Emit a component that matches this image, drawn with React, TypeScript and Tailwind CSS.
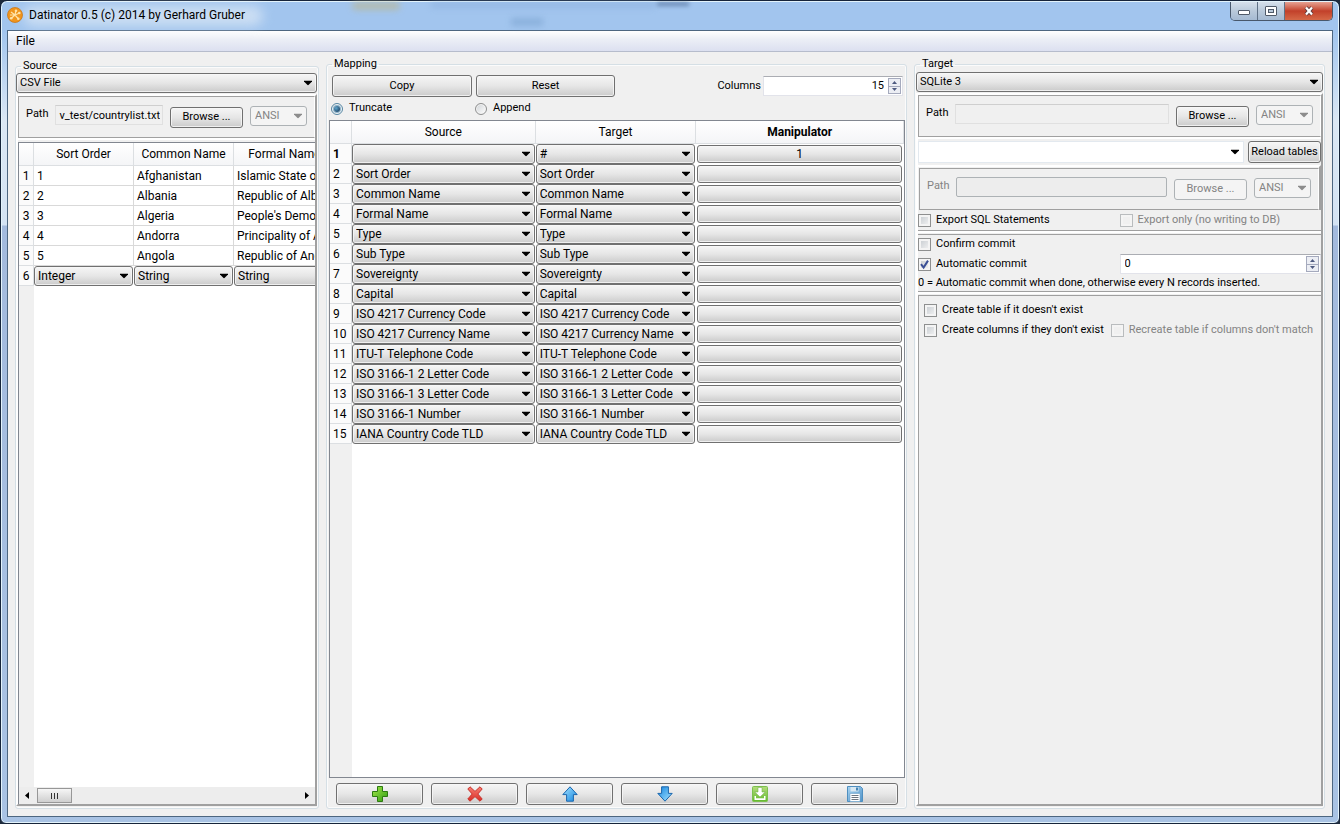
import React, { useState } from 'react'
import clsx from 'clsx'

const fieldNames = [
  'Sort Order',
  'Common Name',
  'Formal Name',
  'Type',
  'Sub Type',
  'Sovereignty',
  'Capital',
  'ISO 4217 Currency Code',
  'ISO 4217 Currency Name',
  'ITU-T Telephone Code',
  'ISO 3166-1 2 Letter Code',
  'ISO 3166-1 3 Letter Code',
  'ISO 3166-1 Number',
  'IANA Country Code TLD',
]

const mappings = [
  { source: '', target: '#', manipulator: '1' },
  ...fieldNames.map((name) => ({ source: name, target: name, manipulator: '' })),
]

const previewRows = [
  ['1', 'Afghanistan', 'Islamic State of Afghanistan'],
  ['2', 'Albania', 'Republic of Albania'],
  ['3', 'Algeria', "People's Democratic Republic of Algeria"],
  ['4', 'Andorra', 'Principality of Andorra'],
  ['5', 'Angola', 'Republic of Angola'],
]

const face =
  'border border-[#707070] rounded-[3px] bg-linear-to-b from-[#f6f6f6] via-[#e6e6e6] to-[#cbcbcb] shadow-[inset_0_0_0_1px_#f8f8f8cc]'
const disabledFace = 'border border-[#adb2b5] rounded-[3px] bg-[#f4f4f4] text-[#838383]'
const headCell = 'h-[23px] border-r border-b border-[#dcdfe2] bg-linear-to-b from-white to-[#f4f5f7] p-0'

interface ButtonProps {
  children?: React.ReactNode
  className?: string
  disabled?: boolean
  label?: string
}

const Button: React.FC<ButtonProps> = ({ children, className, disabled, label }) => (
  <button
    type="button"
    disabled={disabled}
    aria-label={label}
    className={clsx('flex items-center justify-center whitespace-nowrap', disabled ? disabledFace : face, className)}
  >
    {children}
  </button>
)

interface ComboProps {
  label: string
  value: string
  options?: string[]
  className?: string
  disabled?: boolean
  flat?: boolean
}

const Combo: React.FC<ComboProps> = ({ label, value, options, className, disabled, flat }) => (
  <div className={clsx('relative', className)}>
    <select
      aria-label={label}
      defaultValue={value}
      disabled={disabled}
      className={clsx(
        'block h-full w-full appearance-none pr-4 opacity-100',
        disabled ? 'pl-1' : 'pl-[3px]',
        disabled ? disabledFace : flat ? 'border border-[#e3e9ef] bg-white' : face,
      )}
    >
      {(options ?? [value]).map((option) => (
        <option key={option}>{option}</option>
      ))}
    </select>
    <svg
      viewBox="0 0 8 5"
      className={clsx(
        'pointer-events-none absolute top-1/2 right-[5px] h-[5px] w-2 -translate-y-1/2',
        disabled ? 'fill-[#8c8c8c]' : 'fill-black',
      )}
    >
      <path d="M0 0h8v1L4 5 0 1z" />
    </svg>
  </div>
)

interface CheckProps {
  label: string
  checked?: boolean
  disabled?: boolean
}

const Check: React.FC<CheckProps> = ({ label, checked, disabled }) => (
  <label className={clsx('flex items-center gap-[5px] whitespace-nowrap', disabled && 'text-[#838383]')}>
    <span className="relative flex">
      <input
        type="checkbox"
        defaultChecked={checked}
        disabled={disabled}
        className={clsx(
          'peer size-[13px] appearance-none border shadow-[inset_0_0_0_2px_#f4f4f4]',
          disabled ? 'border-[#b9bcbe] bg-[#f0f0f0]' : 'border-[#8e8f8f] bg-linear-to-br from-[#c4c9ce] to-[#f6f6f6]',
        )}
      />
      <svg viewBox="0 0 13 13" className="pointer-events-none absolute inset-0 hidden size-[13px] peer-checked:block">
        <path d="M3 6.2 5.6 9.6 10 2.6" fill="none" stroke="#3a4f96" strokeWidth="2" />
      </svg>
    </span>
    {label}
  </label>
)

interface RadioProps {
  label: string
  checked: boolean
  onChange: () => void
}

const Radio: React.FC<RadioProps> = ({ label, checked, onChange }) => (
  <label className="flex w-[140px] items-center gap-1.5 pr-1">
    <span className="relative flex">
      <input
        type="radio"
        name="mode"
        checked={checked}
        onChange={onChange}
        className="peer size-3 appearance-none rounded-full border border-[#8e8f8f] bg-linear-to-br from-[#cfd3d6] to-white shadow-[inset_0_0_0_1px_#f4f4f4] checked:border-[#5586a3]"
      />
      <span className="pointer-events-none absolute inset-[3px] hidden rounded-full bg-radial-[at_35%_35%] from-[#5fa5cc] to-[#0b2c4e] ring-1 ring-[#8db4cc] peer-checked:block" />
    </span>
    {label}
  </label>
)

interface SpinProps {
  id: string
  value: string
  className?: string
  alignRight?: boolean
}

const Spin: React.FC<SpinProps> = ({ id, value, className, alignRight }) => (
  <div className={clsx('flex h-5 items-center border border-[#e2e3ea] border-t-[#abadb3] bg-white pr-px', className)}>
    <input
      id={id}
      defaultValue={value}
      className={clsx('w-0 flex-1 bg-transparent px-1 outline-none', alignRight && 'text-right')}
    />
    <span className="flex h-4 w-[13px] flex-col border border-[#a5aabd] bg-[#eceef4]">
      <button type="button" aria-label="Increase" className="flex flex-1 items-center justify-center border-b border-[#a5aabd]">
        <svg viewBox="0 0 5 3" className="h-[3px] w-[5px] fill-[#4e5a80]">
          <path d="M0 3 2.5 0 5 3z" />
        </svg>
      </button>
      <button type="button" aria-label="Decrease" className="flex flex-1 items-center justify-center">
        <svg viewBox="0 0 5 3" className="h-[3px] w-[5px] fill-[#4e5a80]">
          <path d="M0 0 2.5 3 5 0z" />
        </svg>
      </button>
    </span>
  </div>
)

interface PathRowProps {
  id: string
  value?: string
  disabled?: boolean
}

const PathRow: React.FC<PathRowProps> = ({ id, value = '', disabled }) => (
  <div
    className={clsx(
      'flex h-[42px] items-start border border-[#a0a0a0] border-r-white px-[7px] pt-2',
      disabled ? 'text-[#838383]' : 'shadow-[0_2px_0_white]',
    )}
  >
    <label htmlFor={id} className="w-[29px] leading-[18px]">
      Path
    </label>
    <input
      id={id}
      defaultValue={value}
      readOnly
      disabled={disabled}
      className={clsx(
        'h-5 w-0 flex-1 px-0.5 text-right outline-none',
        disabled ? 'rounded-[2px] border border-[#adb2b5] bg-[#ededed]' : 'border border-[#e0e0e0] border-t-[#cfcfcf] bg-[#f0f0f0]',
      )}
    />
    <Button disabled={disabled} className="mt-0.5 ml-[7px] h-[21px] w-[73px]">
      Browse ...
    </Button>
    <Combo label="Encoding" value="ANSI" disabled className="mt-px ml-[7px] h-5 w-[57px]" />
  </div>
)

interface GroupProps {
  title: string
  className?: string
  children: React.ReactNode
}

const Group: React.FC<GroupProps> = ({ title, className, children }) => (
  <fieldset className="flex min-h-0 min-w-0 flex-col rounded-[3px] border border-[#d5dfe5] shadow-[inset_0_0_0_1px_#fbfbfb]">
    <legend className="ml-[5px] px-0.5 leading-[14px]">{title}</legend>
    <div className={clsx('flex min-h-0 flex-1 flex-col', className)}>{children}</div>
  </fieldset>
)

const Frame: React.FC<{ children: React.ReactNode }> = ({ children }) => (
  <div className="mt-px flex min-h-0 flex-1 flex-col border-2 border-t-white border-r-[#a0a0a0] border-b-[#a0a0a0] border-l-white">
    {children}
  </div>
)

const SourcePanel: React.FC = () => (
  <Group title="Source" className="pr-px pb-0.5">
    <Combo label="Source type" value="CSV File" className="h-5" />
    <Frame>
      <PathRow id="source-path" value="v_test/countrylist.txt" />
      <div className="mt-1 flex min-h-0 flex-1 flex-col border-t border-l border-[#828790]">
        <div className="flex-1 overflow-hidden bg-[linear-gradient(to_right,#f0f0f0_15px,white_15px)] text-xs">
          <table className="w-[335px] table-fixed border-separate border-spacing-0">
            <colgroup>
              <col className="w-[15px]" />
              <col className="w-[100px]" />
              <col className="w-[100px]" />
              <col className="w-[120px]" />
            </colgroup>
            <thead>
              <tr>
                <th className={headCell} />
                <th className={clsx(headCell, 'font-normal')}>Sort Order</th>
                <th className={clsx(headCell, 'font-normal')}>Common Name</th>
                <th className={clsx(headCell, 'pr-[18px] font-normal')}>Formal Name</th>
              </tr>
            </thead>
            <tbody className="whitespace-nowrap">
              {previewRows.map((row) => (
                <tr key={row[0]} className="h-5 leading-[18px]">
                  <th className="border-r border-b border-[#dcdfe2] bg-[#fbfbfb] p-0 font-normal">{row[0]}</th>
                  {row.map((cell, i) => (
                    <td key={i} className="overflow-hidden border-r border-b border-[#d9d9d9] p-0 pl-[3px]">
                      {cell}
                    </td>
                  ))}
                </tr>
              ))}
              <tr className="h-5">
                <th className="border-r border-b border-[#dcdfe2] bg-[#fbfbfb] p-0 font-normal">6</th>
                {['Integer', 'String', 'String'].map((type, i) => (
                  <td key={i} className="p-0 pr-px">
                    <Combo label={'Column ' + (i + 1) + ' type'} value={type} options={['Integer', 'String']} className="h-5" />
                  </td>
                ))}
              </tr>
            </tbody>
          </table>
        </div>
        <div className="flex h-[17px] items-center bg-[#ededed] px-1.5">
          <svg viewBox="0 0 4 7" className="h-[7px] w-1">
            <path d="M4 0v7L0 3.5z" />
          </svg>
          <div className="ml-2 flex h-[15px] w-[35px] items-center justify-center gap-0.5 border border-[#979797] bg-linear-to-b from-[#f6f6f6] to-[#cfcfcf]">
            <span className="h-1.5 w-px bg-[#333]" />
            <span className="h-1.5 w-px bg-[#333]" />
            <span className="h-1.5 w-px bg-[#333]" />
          </div>
          <svg viewBox="0 0 4 7" className="ml-auto h-[7px] w-1">
            <path d="M0 0v7l4-3.5z" />
          </svg>
        </div>
      </div>
    </Frame>
  </Group>
)

const arrowPath = 'M8 .8 15.2 8.6H11.4V15.2H4.6V8.6H.8z'

const actions = [
  {
    label: 'Add row',
    icon: <path d="M5.5.5h5v5h5v5h-5v5h-5v-5h-5v-5h5z" fill="url(#green)" stroke="#2c7a10" />,
  },
  {
    label: 'Remove row',
    icon: (
      <path
        d="M3 .8 8 5.4 13 .8 15.2 3 10.8 8l4.4 5-2.2 2.2L8 10.6l-5 4.6L.8 13l4.4-5L.8 3z"
        fill="url(#red)"
        stroke="#c9332c"
        strokeLinejoin="round"
      />
    ),
  },
  { label: 'Move up', icon: <path d={arrowPath} fill="url(#blue)" stroke="#1b66ad" strokeLinejoin="round" /> },
  {
    label: 'Move down',
    icon: <path d={arrowPath} transform="rotate(180 8 8)" fill="url(#blue)" stroke="#1b66ad" strokeLinejoin="round" />,
  },
  {
    label: 'Load mapping',
    icon: (
      <>
        <rect x=".5" y=".5" width="15" height="15" rx="1" fill="url(#lime)" stroke="#7cc04e" />
        <path d="M6 1.5h4V6h3.2L8 11 2.8 6H6z" fill="#fff" stroke="#6aa843" strokeWidth=".5" />
        <path d="M2.5 10v4h11v-4H12v2.3H4V10z" fill="#fff" />
      </>
    ),
  },
  {
    label: 'Save mapping',
    icon: (
      <>
        <path d="M.5.5h13l2 2v13H.5z" fill="url(#disk)" stroke="#4f8fc0" />
        <path d="M3.5 1h8v4.5h-8z" fill="#d8e8f2" />
        <path d="M9 1.5h2v3H9z" fill="#4584b5" />
        <path d="M3 7.5h10v8H3z" fill="#fff" stroke="#6fa3c9" strokeWidth=".6" />
        <path d="M4.5 9.5h7M4.5 11.5h7M4.5 13.5h7" stroke="#6b7580" />
      </>
    ),
  },
]

const MappingPanel: React.FC = () => {
  const [mode, setMode] = useState('truncate')

  return (
    <Group title="Mapping" className="pt-1 pr-px pb-[3px] pl-0.5">
      <div className="flex items-center gap-1 pr-0.5 pl-[3px]">
        <Button className="h-[22px] w-[140px]">Copy</Button>
        <Button className="h-[22px] w-[139px]">Reset</Button>
        <div className="ml-auto flex items-center gap-0.5">
          <label htmlFor="columns">Columns</label>
          <Spin id="columns" value="15" alignRight className="w-[140px]" />
        </div>
      </div>
      <div className="flex h-[23px] items-center gap-1 pl-0.5">
        <Radio label="Truncate" checked={mode === 'truncate'} onChange={() => setMode('truncate')} />
        <Radio label="Append" checked={mode === 'append'} onChange={() => setMode('append')} />
      </div>
      <div className="min-h-0 flex-1 overflow-hidden border border-[#828790] bg-[linear-gradient(to_right,#f0f0f0_22px,white_22px)] text-xs">
        <table className="w-full table-fixed border-separate border-spacing-0">
          <colgroup>
            <col className="w-[22px]" />
            <col className="w-[32%]" />
            <col className="w-[28%]" />
            <col />
          </colgroup>
          <thead>
            <tr>
              <th className={headCell} />
              <th className={clsx(headCell, 'font-normal')}>Source</th>
              <th className={clsx(headCell, 'font-normal')}>Target</th>
              <th className={clsx(headCell, 'font-bold')}>Manipulator</th>
            </tr>
          </thead>
          <tbody>
            {mappings.map((row, i) => (
              <tr key={i} className="h-5">
                <th
                  className={clsx(
                    'border-r border-b border-[#dcdfe2] bg-[#fbfbfb] p-0 pl-[3px] text-left leading-[18px]',
                    i === 0 ? 'font-bold' : 'font-normal',
                  )}
                >
                  {i + 1}
                </th>
                <td className="p-0 pr-px">
                  <Combo label={'Source ' + (i + 1)} value={row.source} className="h-5" />
                </td>
                <td className="p-0 pr-px">
                  <Combo label={'Target ' + (i + 1)} value={row.target} className="h-5" />
                </td>
                <td className="p-0 pr-0.5 pl-px">
                  <Button label={'Manipulator ' + (i + 1)} className="h-[18px] w-full">
                    {row.manipulator}
                  </Button>
                </td>
              </tr>
            ))}
          </tbody>
        </table>
      </div>
      <div className="mt-[5px] flex gap-2 px-[7px]">
        {actions.map((action) => (
          <Button key={action.label} label={action.label} className="h-[22px] flex-1">
            <svg viewBox="0 0 16 16" className="size-4">
              {action.icon}
            </svg>
          </Button>
        ))}
      </div>
    </Group>
  )
}

const TargetPanel: React.FC = () => (
  <Group title="Target" className="px-px pt-px pb-0.5">
    <Combo label="Target type" value="SQLite 3" className="h-5" />
    <Frame>
      <PathRow id="target-path" />
      <div className="mt-1 flex h-[22px] gap-1">
        <Combo label="Table" value="" flat className="flex-1" />
        <Button className="w-[73px]">Reload tables</Button>
      </div>
      <div className="mt-0.5 border-t-2 border-r-2 border-white border-r-[#a0a0a0] pt-px pl-px">
        <PathRow id="export-path" disabled />
      </div>
      <div className="grid h-[21px] grid-cols-2 items-center border-b border-[#a0a0a0] pt-px shadow-[0_2px_0_white]">
        <Check label="Export SQL Statements" />
        <Check label="Export only (no writing to DB)" disabled />
      </div>
      <div className="mt-[3px] grid h-[58px] grid-cols-2 grid-rows-[18px_22px_16px] items-center border-y border-[#a0a0a0] shadow-[0_2px_0_white]">
        <Check label="Confirm commit" />
        <span />
        <Check label="Automatic commit" checked />
        <Spin id="commit-every" value="0" />
        <label htmlFor="commit-every" className="col-span-2 whitespace-nowrap">
          0 = Automatic commit when done, otherwise every N records inserted.
        </label>
      </div>
      <div className="mt-[3px] flex flex-1 flex-col border-t border-l border-[#a0a0a0] pt-1 pl-[5px]">
        <div className="flex h-5 items-center">
          <Check label="Create table if it doesn't exist" />
        </div>
        <div className="flex h-5 items-center gap-[7px]">
          <Check label="Create columns if they don't exist" />
          <Check label="Recreate table if columns don't match" disabled />
        </div>
      </div>
    </Frame>
  </Group>
)

const Gradients: React.FC = () => (
  <svg className="absolute size-0" aria-hidden="true">
    <defs>
      <linearGradient id="green" x2="1" y2="1">
        <stop stopColor="#a5e84a" />
        <stop offset="1" stopColor="#2f9d12" />
      </linearGradient>
      <linearGradient id="red" x2="0" y2="1">
        <stop stopColor="#f77f74" />
        <stop offset="1" stopColor="#d92c25" />
      </linearGradient>
      <linearGradient id="blue" x2="1" y2="1">
        <stop stopColor="#a8e4ff" />
        <stop offset="1" stopColor="#1386e0" />
      </linearGradient>
      <linearGradient id="lime" x2="0" y2="1">
        <stop stopColor="#b5dd7d" />
        <stop offset="1" stopColor="#63b92f" />
      </linearGradient>
      <linearGradient id="disk" x2="1" y2="1">
        <stop stopColor="#a9d4f0" />
        <stop offset="1" stopColor="#4f93c9" />
      </linearGradient>
    </defs>
  </svg>
)

const TitleBar: React.FC = () => (
  <header className="relative flex h-7 shrink-0 items-start">
    <div className="absolute top-0 left-[26%] h-2 w-12 rounded-full bg-[#b9b795] opacity-70 blur-[3px]" />
    <div className="absolute top-0 left-[32%] h-1.5 w-56 bg-[#86a9d8] opacity-50 blur-[3px]" />
    <div className="absolute top-0 left-[49%] h-1 w-8 bg-[#46628c] opacity-60 blur-[2px]" />
    <div className="absolute top-4 left-[38%] h-2 w-8 bg-[#7ba4d0] opacity-60 blur-[3px]" />
    <div className="absolute top-1 left-4 h-5 w-60 rounded-full bg-[#dfeaf6] opacity-70 blur-[6px]" />
    <h1 className="relative flex items-center gap-1.5 pt-1 text-xs leading-[18px]">
      <svg viewBox="0 0 16 16" className="size-4">
        <circle cx="8" cy="8" r="7.5" fill="#f0951d" stroke="#c8700c" strokeWidth=".7" />
        <path d="M4 5 8 8l1-4.500M8 8l4.500-2M8 8l3.500 4M8 8l-4 3.500M8 8H3" fill="none" stroke="#ffe3a8" strokeWidth="1.2" />
        <circle cx="9" cy="3.8" r="1.3" fill="#ffe3a8" />
        <circle cx="12.3" cy="6" r="1.3" fill="#ffe3a8" />
        <circle cx="4.2" cy="11.3" r="1.3" fill="#ffe3a8" />
        <circle cx="11.3" cy="11.7" r="1.3" fill="#ffe3a8" />
      </svg>
      Datinator 0.5 (c) 2014 by Gerhard Gruber
    </h1>
    <div className="relative ml-auto flex h-[19px] overflow-hidden rounded-b-[5px] border border-t-0 border-[#48586c]">
      <button
        type="button"
        aria-label="Minimize"
        className="flex w-[27px] items-center justify-center border-r border-[#5f7186] bg-linear-to-b from-[#d6e0eb] via-[#b9c9da] via-50% to-[#a5bad2]"
      >
        <svg viewBox="0 0 12 10" className="h-2.5 w-3">
          <rect x=".5" y="4.5" width="11" height="4" rx=".5" fill="#fff" stroke="#505a68" />
        </svg>
      </button>
      <button
        type="button"
        aria-label="Maximize"
        className="flex w-[27px] items-center justify-center border-r border-[#5f7186] bg-linear-to-b from-[#d6e0eb] via-[#b9c9da] via-50% to-[#a5bad2]"
      >
        <svg viewBox="0 0 12 10" className="h-2.5 w-3">
          <rect x=".5" y=".5" width="11" height="9" rx=".5" fill="#fff" stroke="#505a68" />
          <rect x="3.5" y="3.5" width="5" height="3" fill="#b9c9da" stroke="#505a68" />
        </svg>
      </button>
      <button
        type="button"
        aria-label="Close"
        className="flex w-[47px] items-center justify-center bg-linear-to-b from-[#e5a192] via-[#c2402a] via-50% to-[#d56847]"
      >
        <svg viewBox="0 0 12 10" className="h-2.5 w-3">
          <path d="m3 1.5 6 7m0-7-6 7" stroke="#5c3a3c" strokeWidth="4" />
          <path d="m3 1.5 6 7m0-7-6 7" stroke="#fff" strokeWidth="2.2" />
        </svg>
      </button>
    </div>
  </header>
)

const App: React.FC = () => (
  <div className="h-screen min-h-[600px] min-w-[1200px] bg-[#1d2a3c] font-[Roboto,sans-serif] text-[11px] text-black">
    <Gradients />
    <div className="flex h-full flex-col rounded-t-[7px] rounded-b-[6px] border border-[#16243a] bg-[linear-gradient(to_bottom,#a2c5ee_30px,#dbe7f4_120px,#d4e3f3_224px,#a3badd_225px,#a9c3e4_100%)] px-1.5 pt-px pb-1.5 shadow-[inset_0_0_0_1px_#e3f3fb]">
      <TitleBar />
      <div className="flex min-h-0 flex-1 flex-col border border-[#4d6680] bg-[#f0f0f0]">
        <nav className="h-[21px] shrink-0 border-b border-[#b6bccc] bg-linear-to-b from-white via-[#eceff6] via-40% to-[#dce0f0] px-2">
          <button type="button" className="text-xs leading-5">
            File
          </button>
        </nav>
        <main className="grid min-h-0 flex-1 grid-cols-[304fr_581fr_411fr] gap-[7px] p-[7px] pt-[5px]">
          <div className="grid min-h-0 min-w-0 pt-0.5">
            <SourcePanel />
          </div>
          <MappingPanel />
          <TargetPanel />
        </main>
      </div>
    </div>
  </div>
)

export default App
